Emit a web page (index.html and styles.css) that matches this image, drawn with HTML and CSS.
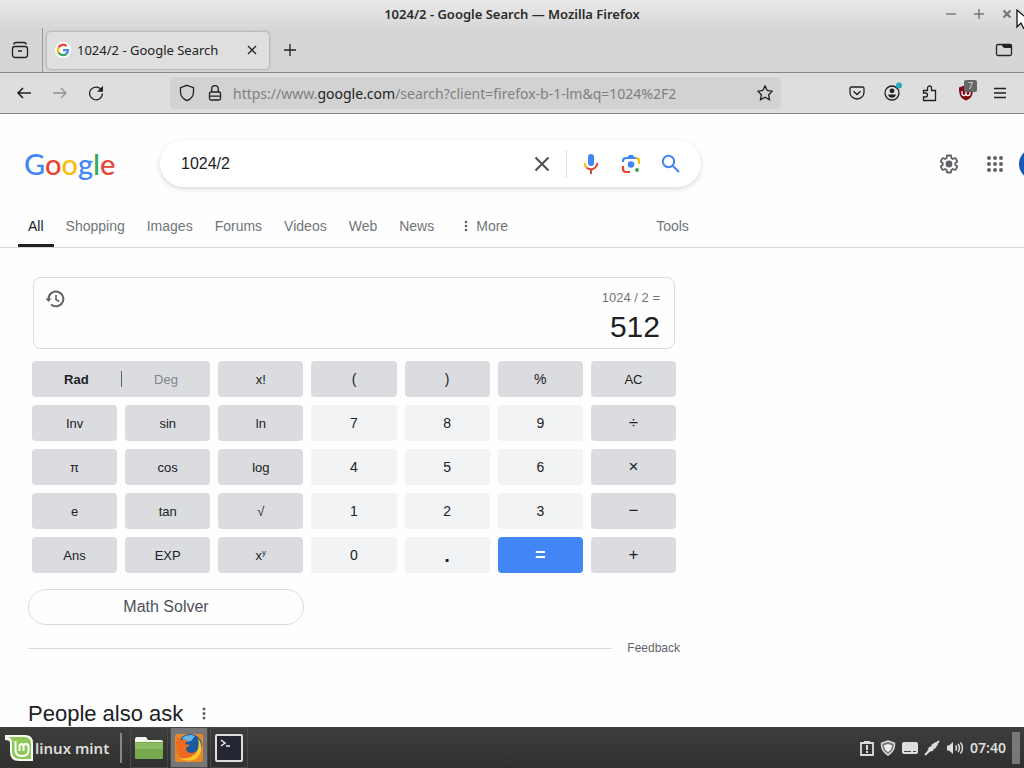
FILE: index.html
```html
<!DOCTYPE html>
<html lang="en">
<head>
<meta charset="utf-8">
<title>1024/2 - Google Search</title>
<link rel="stylesheet" href="styles.css">
</head>
<body>
<div class="window-title">
  <span class="window-name">1024/2 - Google Search — Mozilla Firefox</span>
  <div class="window-controls">
    <button aria-label="Minimize"><svg width="12" height="12" viewBox="0 0 12 12"><path d="M1 6h10"/></svg></button>
    <button aria-label="Maximize"><svg width="12" height="12" viewBox="0 0 12 12"><path d="M1 6h10M6 1v10"/></svg></button>
    <button aria-label="Close" class="strong"><svg width="12" height="12" viewBox="0 0 12 12"><path d="M2.5 2.5l7 7M9.5 2.5l-7 7"/></svg></button>
  </div>
</div>

<div class="tab-strip">
  <button class="tool view-button" aria-label="Recent browsing"><svg width="18" height="18" viewBox="0 0 18 18"><rect x="1.500" y="5.500" width="15" height="11" rx="2.500"/><path d="M2.500 3.500Q3.200 1.500 5 1.500H13Q14.800 1.500 15.500 3.500M7 10h4"/></svg></button>
  <div class="tab">
    <svg class="favicon" width="16" height="16" viewBox="0 0 18 18"><circle cx="9" cy="9" r="9" fill="#fff"/><g fill="none" stroke-width="2.600"><path d="M13 4.600A5.700 5.700 0 0 0 4 6.200" stroke="#ea4335"/><path d="M4 6.200a5.700 5.700 0 0 0 0 5.600" stroke="#fbbc05"/><path d="M4 11.800a5.700 5.700 0 0 0 8.800 1.500" stroke="#34a853"/><path d="M12.800 13.300A5.500 5.500 0 0 0 14.600 9.200H9" stroke="#4285f4"/></g></svg>
    <span class="tab-title">1024/2 - Google Search</span>
    <button class="tool tab-close" aria-label="Close tab"><svg width="10" height="10" viewBox="0 0 10 10"><path d="M1 1l8 8M9 1L1 9"/></svg></button>
  </div>
  <button class="tool new-tab" aria-label="New tab"><svg width="14" height="14" viewBox="0 0 14 14"><path d="M7 1v12M1 7h12"/></svg></button>
  <button class="tool all-tabs" aria-label="List all tabs"><svg width="18" height="14" viewBox="0 0 18 14"><rect x="1.500" y="1.500" width="15" height="11" rx="1.500"/><path d="M7 1h8.500a1.500 1.500 0 0 1 1.500 1.500V5H9.500Q7 4.500 7 1z" fill="#222" stroke="none"/></svg></button>
</div>

<div class="nav-bar">
  <div class="nav-buttons">
    <button class="tool" aria-label="Back"><svg width="16" height="16" viewBox="0 0 16 16"><path class="heavy" d="M15 8H2M7 3L2 8l5 5"/></svg></button>
    <button class="tool faded" aria-label="Forward"><svg width="16" height="16" viewBox="0 0 16 16"><path d="M1 8h13M9 3l5 5-5 5"/></svg></button>
    <button class="tool" aria-label="Reload"><svg width="16" height="16" viewBox="0 0 16 16"><path d="M13.500 5.200A6.400 6.400 0 1 0 14.400 8.500"/><path d="M15 .8v6H9z" fill="#222" stroke="none"/></svg></button>
  </div>
  <div class="address">
    <svg width="16" height="18" viewBox="0 0 16 18"><path d="M8 1.300L14.500 3.600V8c0 4-2.500 6.900-6.500 8.700C4 14.900 1.500 12 1.500 8V3.600z"/></svg>
    <svg width="14" height="18" viewBox="0 0 14 18"><rect x="1.500" y="8" width="11" height="8" rx="1.500"/><path d="M3.700 8V5a3.300 3.300 0 0 1 6.600 0v3M2 12.200h10"/></svg>
    <span class="url" tabindex="0">https://www.<b>google.com</b>/search?client=firefox-b-1-lm&amp;q=1024%2F2</span>
    <button class="tool" aria-label="Bookmark"><svg width="16" height="16" viewBox="0 0 16 16"><path d="M8 .9l2.200 4.600 5 .7-3.600 3.500.9 5L8 12.300l-4.500 2.400.9-5L.8 6.200l5-.7z"/></svg></button>
  </div>
  <div class="extensions">
    <button class="tool" aria-label="Pocket"><svg width="16" height="16" viewBox="0 0 16 16"><path d="M2.500 2h11Q15 2 15 3.500V7.500A7 6.500 0 0 1 1 7.500V3.500Q1 2 2.500 2zM4.500 6.200L8 9.500l3.500-3.300"/></svg></button>
    <button class="tool" aria-label="Account"><svg width="18" height="22" viewBox="0 0 18 22"><circle cx="8" cy="11" r="7"/><circle cx="8" cy="8.800" r="2.400" fill="#222" stroke="none"/><path d="M4 12.500h8q-1 3.300-4 3.300t-4-3.300z" fill="#222" stroke="none"/><circle cx="15" cy="3.500" r="3" fill="#22aebe" stroke="none"/></svg></button>
    <button class="tool" aria-label="Extensions"><svg width="18" height="18" viewBox="0 0 18 18"><path d="M2.500 6.500h4V4a2 2 0 0 1 4 0v2.500h4v10h-12V13h2a2 2 0 0 0 0-4h-2z"/></svg></button>
    <button class="tool shield" aria-label="Blocker"><svg width="16" height="18" viewBox="0 0 16 18"><path d="M8 1l7 2.500c0 7-1 10.500-7 13C2 14 1 10.500 1 3.500z" fill="#800610" stroke="none"/><path d="M4 7v2.500q0 2 2 2t2-2V7M8 9.500q0 2 2 2t2-2v-2" stroke="#fff"/></svg><span class="badge">7</span></button>
    <button class="tool" aria-label="Menu"><svg width="14" height="14" viewBox="0 0 14 14"><path d="M1 2.500h12M1 7h12M1 11.500h12"/></svg></button>
  </div>
</div>

<main class="page">
  <header class="search-header">
    <a class="logo" href="#" aria-label="Google"><span class="blue">G</span><span class="red">o</span><span class="yellow">o</span><span class="blue">g</span><span class="green">l</span><span class="red">e</span></a>
    <form class="search-box">
      <input type="text" value="1024/2" aria-label="Search">
      <button type="button" aria-label="Clear"><svg width="16" height="16" viewBox="0 0 16 16" stroke="#4d5156" stroke-width="2"><path d="M1.500 1.500l13 13M14.500 1.500l-13 13"/></svg></button>
      <span class="divider"></span>
      <button type="button" aria-label="Voice"><svg width="16" height="22" viewBox="0 0 16 22"><rect x="5" y="1" width="6" height="12" rx="3" fill="#4285f4"/><g fill="none" stroke-width="2"><path d="M1.700 10q0 3 2 4.700" stroke="#fbbc04"/><path d="M3.700 14.700Q8 18 12 14.700" stroke="#ea4335"/><path d="M12 14.700q2.300-1.700 2.300-4.700" stroke="#ea4335"/><path d="M8 16.500V21" stroke="#b5533c"/></g></svg></button>
      <button type="button" aria-label="Lens"><svg width="20" height="20" viewBox="0 0 20 20" fill="none" stroke-width="2.200"><path d="M2 8V7q0-3 3-3h10" stroke="#4285f4"/><path d="M6.500 3.500L8 1h4l1.500 2.500z" fill="#4285f4"/><path d="M15 4q3 0 3 3v3" stroke="#fbbc04"/><path d="M2 12v3q0 3 3 3h4" stroke="#ea4335"/><circle cx="10" cy="10.500" r="3.300" fill="#4285f4" stroke="none"/><circle cx="16" cy="16" r="2" fill="#34a853" stroke="none"/></svg></button>
      <button type="submit" aria-label="Search"><svg width="20" height="20" viewBox="0 0 20 20" fill="none" stroke="#4285f4" stroke-width="2"><circle cx="7.500" cy="7.500" r="5.700"/><path d="M11.700 11.700l6.300 6.300"/></svg></button>
    </form>
    <div class="account-links">
      <button aria-label="Settings"><svg width="22" height="22" viewBox="0 0 24 24" fill="#5f6368"><path d="M13.850 22.250h-3.700c-.74 0-1.360-.54-1.450-1.270l-.27-1.890c-.27-.14-.53-.29-.79-.46l-1.800.72c-.7.26-1.470-.03-1.810-.65L2.200 15.530c-.35-.66-.2-1.440.36-1.880l1.530-1.190c-.01-.15-.02-.3-.02-.46 0-.15.01-.31.020-.46l-1.520-1.190c-.59-.45-.74-1.260-.37-1.880l1.850-3.190c.34-.62 1.110-.9 1.790-.63l1.810.73c.26-.17.52-.32.78-.46l.27-1.910c.09-.7.710-1.250 1.440-1.250h3.700c.74 0 1.360.54 1.450 1.270l.27 1.890c.27.140.53.29.79.46l1.800-.72c.71-.26 1.480.03 1.820.65l1.840 3.180c.36.66.2 1.440-.36 1.880l-1.520 1.190c.01.15.02.3.02.46s-.01.31-.02.46l1.520 1.190c.56.45.72 1.230.37 1.860l-1.860 3.220c-.34.62-1.110.9-1.800.63l-1.800-.72c-.26.17-.52.32-.78.46l-.27 1.910c-.1.680-.72 1.220-1.460 1.220zm-3.230-2h2.760l.37-2.550.53-.22c.44-.18.88-.44 1.340-.78l.45-.34 2.380.96 1.380-2.400-2.030-1.580.07-.56c.030-.26.060-.51.060-.78s-.03-.53-.06-.78l-.07-.56 2.030-1.580-1.390-2.400-2.390.96-.45-.35c-.42-.32-.87-.58-1.330-.77l-.52-.22-.37-2.550h-2.760l-.37 2.550-.53.21c-.44.19-.88.44-1.340.79l-.45.330-2.380-.95-1.390 2.390 2.030 1.580-.07.56a7 7 0 0 0-.06.790c0 .26.020.53.060.78l.07.56-2.030 1.580 1.380 2.400 2.390-.96.45.35c.43.330.86.580 1.330.77l.53.220.38 2.550z"/><circle cx="12" cy="12" r="3.700"/></svg></button>
      <button aria-label="Apps"><svg width="16" height="16" viewBox="0 0 16 16" fill="#5f6368"><circle cx="2" cy="2" r="2"/><circle cx="8" cy="2" r="2"/><circle cx="14" cy="2" r="2"/><circle cx="2" cy="8" r="2"/><circle cx="8" cy="8" r="2"/><circle cx="14" cy="8" r="2"/><circle cx="2" cy="14" r="2"/><circle cx="8" cy="14" r="2"/><circle cx="14" cy="14" r="2"/></svg></button>
      <button class="avatar" aria-label="Account"></button>
    </div>
  </header>

  <nav class="filters">
    <a class="current" href="#">All</a><a href="#">Shopping</a><a href="#">Images</a><a href="#">Forums</a><a href="#">Videos</a><a href="#">Web</a><a href="#">News</a>
    <a class="more" href="#"><svg width="4" height="14" viewBox="0 0 4 14"><circle cx="2" cy="3" r="1.300"/><circle cx="2" cy="7" r="1.300"/><circle cx="2" cy="11" r="1.300"/></svg>More</a>
    <a class="tools" href="#">Tools</a>
  </nav>

  <section class="results">
    <div class="calculator">
      <div class="display">
        <button aria-label="History"><svg width="20" height="18" viewBox="0 0 20 18" fill="none" stroke="#5f6368" stroke-width="2"><path d="M3.500 9A7.400 7.400 0 1 1 6 14.500"/><path d="M.5 8.500h6L3.500 12z" fill="#5f6368" stroke="none"/><path d="M11 5v4.500l3.200 2" stroke-width="1.600"/></svg></button>
        <div class="readout"><span class="expression">1024 / 2 =</span><output>512</output></div>
      </div>
      <div class="keys">
        <div class="angle"><button class="chosen">Rad</button><span></span><button>Deg</button></div>
        <button>x!</button><button class="sign">(</button><button class="sign">)</button><button class="sign">%</button><button>AC</button>
        <button>Inv</button><button>sin</button><button>ln</button><button class="digit">7</button><button class="digit">8</button><button class="digit">9</button><button class="operator">÷</button>
        <button>π</button><button>cos</button><button>log</button><button class="digit">4</button><button class="digit">5</button><button class="digit">6</button><button class="operator">×</button>
        <button>e</button><button>tan</button><button>√</button><button class="digit">1</button><button class="digit">2</button><button class="digit">3</button><button class="operator">−</button>
        <button>Ans</button><button>EXP</button><button><span>x<sup>y</sup></span></button><button class="digit">0</button><button class="digit point">.</button><button class="equals">=</button><button class="operator">+</button>
      </div>
    </div>
    <button class="solver">Math Solver</button>
    <div class="feedback"><hr><a href="#">Feedback</a></div>
    <h2>People also ask <svg width="4" height="14" viewBox="0 0 4 14"><circle cx="2" cy="2" r="1.500"/><circle cx="2" cy="6.500" r="1.500"/><circle cx="2" cy="11" r="1.500"/></svg></h2>
  </section>
</main>

<footer class="taskbar">
  <button class="mint"><svg width="30" height="28" viewBox="0 0 30 28"><path d="M0 1h20q8 0 8 8v18H14Q5 27 5 18V9Q5 6 0 6z" fill="#f5faef"/><path d="M3 3h16q7 0 7 7v15H15q-8 0-8-8V8Q7 4 3 3z" fill="#8cc757"/><path d="M10.500 7v9q0 6 6 6h1q6 0 6-6v-3q0-3-2.500-3t-2.500 3v4M18.500 13q0-3-2-3t-2 3v4" fill="none" stroke="#fff" stroke-width="2"/></svg><span>linux mint</span></button>
  <span class="panel-divider"></span>
  <div class="launchers">
    <button aria-label="Files"><svg width="28" height="24" viewBox="0 0 28 24"><path d="M0 3q0-2 2-2h9l2 3h13q2 0 2 2v5H0z" fill="#f2f5ec"/><rect y="6" width="28" height="17" rx="1" fill="#78a94e"/><path d="M0 7h28v6H0z" fill="#8cbc63"/></svg></button>
    <button class="active" aria-label="Firefox"><svg width="30" height="30" viewBox="0 0 30 30"><rect x="1" y="1" width="28" height="28" rx="2" fill="#e8862a"/><circle cx="16" cy="13" r="12" fill="#1b5a9f"/><path d="M8 5q6-5 13-2l-4 5-6 1z" fill="#65b7e8"/><path d="M3 4l5 3q3-1 6 0-3 2-3 4l5 1-4 3q0 5 6 5 6-1 7-6 2 8-5 12-8 4-14-2Q0 17 3 4z" fill="#ee6a20"/><path d="M24 5q8 12-2 21-8 4-17-1 11 2 17-5 4-6 2-15z" fill="#fdc52b"/></svg></button>
    <button aria-label="Terminal"><svg width="28" height="28" viewBox="0 0 28 28"><rect x="1" y="1" width="26" height="26" rx="1" fill="#242632" stroke="#ddd" stroke-width="2"/><path d="M6 6l4 3-4 3M11 12h4" fill="none" stroke="#eee" stroke-width="1.500"/></svg></button>
  </div>
  <div class="tray">
    <svg width="14" height="16" viewBox="0 0 14 16"><path d="M1 3h12v12H1zM4 2h6" fill="none" stroke="#ddd" stroke-width="1.800"/><path d="M7 5v5M7 11v2" stroke="#ddd" stroke-width="2"/></svg>
    <svg width="16" height="16" viewBox="0 0 16 16"><path d="M8 1l6.500 2.300Q15 11 8 15 1 11 1.500 3.300z" fill="#777" stroke="#ddd" stroke-width="1.500"/><path d="M8 4l4 1.300Q12 10 8 12 4 10 4 5.300z" fill="#eee"/></svg>
    <svg width="16" height="14" viewBox="0 0 16 14"><rect y="1" width="16" height="12" rx="2" fill="#ddd"/><path d="M2 10.500h7M11 10.500h3" stroke="#444"/></svg>
    <svg width="16" height="16" viewBox="0 0 16 16"><path d="M1 15l5-5M10 6l5-5" stroke="#ddd" stroke-width="2"/><path d="M3 12l2-5 3-1 2 2-1 3zM7 5l5-3 2 2-3 5z" fill="#ddd"/></svg>
    <svg width="18" height="16" viewBox="0 0 18 16"><path d="M1 5.500h2l4-3.500v12l-4-3.500H1z" fill="#ddd"/><path d="M9.500 5.500q2 2.500 0 5M12 4q3 4 0 8M14.500 2.500q4 5.500 0 11" fill="none" stroke="#ddd" stroke-width="1.500"/></svg>
    <time>07:40</time>
    <span class="show-desktop"></span>
  </div>
</footer>
<svg class="pointer" width="18" height="20" viewBox="0 0 18 20"><path d="M1 1v17l4-4 3 6 3-1-2-6h6z" fill="#fff" stroke="#111" stroke-width="1.300"/></svg>
</body>
</html>
```
FILE: styles.css
```css
* { box-sizing: border-box; }

body {
  margin: 0;
  height: 100vh;
  display: flex;
  flex-direction: column;
  overflow: hidden;
  position: relative;
  background: #fefefe;
  color: #202124;
  font-family: "Liberation Sans", Arial, sans-serif;
}

button, input {
  font: inherit;
  color: inherit;
  border: 0;
  background: none;
  padding: 0;
}

button { display: inline-flex; align-items: center; justify-content: center; }
a { color: inherit; text-decoration: none; }
svg { display: block; flex: none; }

.window-title, .tab-strip, .nav-bar, .taskbar {
  flex: none;
  display: flex;
  align-items: center;
  font-family: "Noto Sans", sans-serif;
}

/* Window frame */
.window-title {
  height: 28px;
  background: linear-gradient(#e9e9e9, #d7d7d7);
  display: grid;
  grid-template-columns: 1fr auto 1fr;
}
.window-name { grid-column: 2; font-size: 13px; font-weight: 600; color: #2b2b2b; }
.window-controls { justify-self: end; display: flex; gap: 16px; padding-right: 11px; }
.window-controls svg { stroke: #777; stroke-width: 1.4; }
.window-controls .strong svg { stroke-width: 2.2; }

.tool svg, .address svg { fill: none; stroke: #222; stroke-width: 1.3; }
.tool .heavy { stroke-width: 1.6; }

.tab-strip { height: 45px; background: #d6d6d6; border-bottom: 1px solid #888; padding-right: 11px; }
.view-button { width: 43px; height: 100%; padding-right: 2px; border-right: 1px solid #999; }
.tab {
  display: flex;
  align-items: center;
  width: 222px;
  height: 37px;
  margin-left: 4px;
  padding: 0 12px 0 8px;
  background: #dfdfdf;
  border-radius: 4px;
  box-shadow: 0 0 3px #888;
}
.tab-title { font-size: 13px; margin-left: 6px; flex: 1; white-space: nowrap; color: #222; }
.new-tab { margin-left: 14px; }
.all-tabs { margin-left: auto; }

.nav-bar { height: 41px; background: #dedede; border-bottom: 1px solid #888; padding: 0 17px 0 16px; }
.nav-buttons { display: flex; gap: 20px; width: 154px; flex: none; }
.faded { opacity: .4; }
.address {
  flex: 0 1 611px;
  display: flex;
  align-items: center;
  height: 32px;
  gap: 13px;
  padding: 0 8px 0 9px;
  background: #d2d2d2;
  border-radius: 4px;
}
.url { flex: 1; margin-left: -2px; font-size: 14px; color: #808080; white-space: nowrap; }
.url b { font-weight: 400; color: #222; }
.extensions { margin-left: auto; display: flex; align-items: center; gap: 19px; }
.shield { position: relative; }
.badge {
  position: absolute;
  top: -4px;
  left: 6px;
  padding: 0 4px;
  font-size: 9px;
  line-height: 12px;
  color: #ddd;
  background: #666;
  border-radius: 2px;
}

/* Search page */
.page { flex: 1; min-height: 0; overflow: hidden; }
.search-header { display: flex; align-items: center; padding: 26px 0 0 24px; }
.logo { width: 136px; font: 500 29px/46px Lato, sans-serif; flex: none; }
.blue { color: #4285f4; }
.red { color: #ea4335; }
.yellow { color: #fbbc05; }
.green { color: #34a853; }
.search-box {
  flex: 0 1 541px;
  display: flex;
  align-items: center;
  height: 47px;
  padding: 0 20px 0 21px;
  border-radius: 24px;
  background: #fff;
  box-shadow: 0 2px 5px rgba(60, 64, 67, .2);
}
.search-box input { flex: 1; min-width: 0; font-size: 16px; outline: 0; }
.search-box button { margin-left: 22px; }
.search-box button:first-of-type { margin-left: 0; }
.search-box button:last-of-type { margin-left: 20px; }
.divider { width: 1px; height: 28px; margin: 0 -6px 0 16px; background: #dadce0; }
.account-links { display: flex; align-items: center; margin-left: auto; gap: 27px; width: 86px; }
.avatar { flex: none; width: 32px; height: 32px; margin-left: -11px; border-radius: 50%; background: #185abc; }

.filters {
  display: flex;
  gap: 2px;
  margin-top: 18px;
  padding-left: 18px;
  border-bottom: 1px solid #dadce0;
  font-size: 14px;
  line-height: 42px;
  color: #70757a;
}
.filters a { padding: 0 10px; }
.filters .current { color: #202124; box-shadow: inset 0 -3px #202124; }
.filters .more { display: flex; align-items: center; gap: 8px; margin-left: 8px; }
.filters .tools { margin-left: 126px; }
.filters svg, h2 svg { fill: #5f6368; }

.results { max-width: 680px; padding: 29px 0 0 28px; }
.calculator { padding: 0 4px; }
.display {
  display: flex;
  justify-content: space-between;
  align-items: flex-start;
  height: 72px;
  margin: 0 1px 12px;
  padding: 12px 14px 0 11px;
  border: 1px solid #dadce0;
  border-radius: 8px;
}
.readout { display: grid; justify-items: end; }
.expression { font-size: 13px; line-height: 16px; color: #70757a; }
output { font-size: 30px; line-height: 42px; }

.keys { display: grid; grid-template-columns: repeat(7, 1fr); grid-auto-rows: 36px; gap: 8px; }
.keys > * { background: #dadce0; border-radius: 4px; font-size: 13px; }
.angle { grid-column: span 2; display: grid; grid-template-columns: 1fr 1px 1fr; align-items: center; }
.angle span { height: 16px; background: #5f6368; }
.angle button { color: #80868b; }
.angle .chosen { color: #202124; font-weight: 700; }
.keys .sign { font-size: 14px; }
.keys .digit { background: #f2f3f4; font-size: 14px; }
.keys .operator { font-size: 17px; }
.keys .point { font-size: 20px; font-weight: 700; }
.keys .equals { background: #4285f4; color: #fff; font-size: 18px; font-weight: 700; }
sup { font-size: 8px; line-height: 0; }

.solver {
  width: 276px;
  height: 36px;
  margin-top: 16px;
  border: 1px solid #dadce0;
  border-radius: 18px;
  font-size: 16px;
  color: #4d5156;
}
.feedback { display: flex; align-items: center; gap: 15px; margin-top: 14px; font-size: 12px; line-height: 18px; color: #5f6368; }
hr { flex: 1; margin: 0; border: 0; border-top: 1px solid #dadce0; }
h2 { display: flex; align-items: center; gap: 19px; margin: 43px 0 0; font-size: 22px; line-height: 28px; font-weight: 400; }

/* Desktop panel */
.taskbar { height: 41px; background: linear-gradient(#3e3e3d, #2f2f2e); color: #ddd; }
.mint { padding-left: 5px; font-size: 15px; font-weight: 600; white-space: nowrap; }
.panel-divider { width: 2px; height: 30px; margin-left: 11px; background: #888; }
.launchers { display: flex; gap: 2px; height: 100%; margin-left: 8px; }
.launchers button { width: 38px; border: 1px solid #484848; }
.launchers .active { background: #777; }
.tray { display: flex; align-items: center; gap: 6px; height: 100%; margin-left: auto; padding-right: 4px; }
time { font-size: 14px; font-weight: 600; }
.show-desktop { width: 8px; height: 32px; background: #777; }

.pointer { position: absolute; top: 9px; right: -10px; }
```
